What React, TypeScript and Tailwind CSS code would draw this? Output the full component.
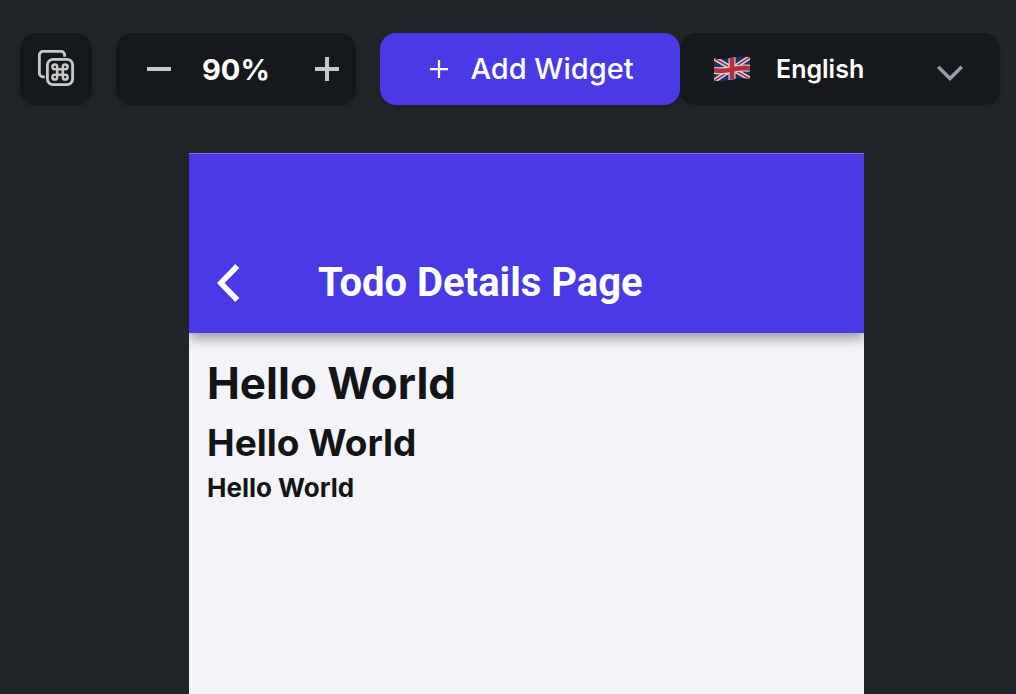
import { useState } from "react";

function CopyCommandIcon() {
  return (
    <svg viewBox="0 0 36 36" className="size-9" fill="none" stroke="#c9c9c9" aria-hidden="true">
      <path d="M6.8 26.9H5a3.6 3.6 0 0 1-3.6-3.6V5A3.6 3.6 0 0 1 5 1.4h18A3.6 3.6 0 0 1 26.600 5v1.700" strokeWidth="2.800" />
      <rect x="9.400" y="9.400" width="25.200" height="25.200" rx="5.600" strokeWidth="2.800" />
      <path
        d="M19.200 19.200h5.600v5.600h-5.600zM19.200 19.200h-2.400a2.400 2.400 0 1 1 2.400-2.400zM24.800 19.200v-2.400a2.400 2.400 0 1 1 2.400 2.400zM24.800 24.800h2.400a2.400 2.400 0 1 1-2.400 2.400zM19.200 24.800v2.400a2.400 2.400 0 1 1-2.400-2.400z"
        strokeWidth="2.500"
      />
    </svg>
  );
}

function FlagIcon() {
  return (
    <svg viewBox="0 0 36 26" className="h-[26px] w-9" aria-hidden="true">
      <defs>
        <clipPath id="flag-shape">
          <path d="M0 2.500C6 3.600 12 3 18 1.700S30 0 36 1.200V23c-6-1.200-12-.6-18 .6S6 26 0 24.500z" />
        </clipPath>
      </defs>
      <g clipPath="url(#flag-shape)">
        <path fill="#173468" d="M0 0h36v26H0z" />
        <path d="M0 2l36 21M0 25L36 1" stroke="#d9dbe0" strokeWidth="4.600" />
        <path d="M0 2l36 21M0 25L36 1" stroke="#b5303d" strokeWidth="1.800" />
        <path d="M0 14.400c6 .9 12 .4 18-.9s12-2 18-1.100M18 0v26" fill="none" stroke="#d9dbe0" strokeWidth="7" />
        <path d="M0 14.400c6 .9 12 .4 18-.9s12-2 18-1.100M18 0v26" fill="none" stroke="#b5303d" strokeWidth="4.800" />
      </g>
    </svg>
  );
}

function PlusIcon({ className, weight }: { className: string; weight: number }) {
  return (
    <svg viewBox="0 0 24 24" className={className} fill="none" stroke="currentColor" strokeWidth={weight} aria-hidden="true">
      <path d="M0 12h24M12 0v24" />
    </svg>
  );
}

function Toolbar() {
  const [zoom, setZoom] = useState(90);
  const [language, setLanguage] = useState("English");

  return (
    <header className="flex h-[72px] pr-4 pl-5">
      <button
        type="button"
        aria-label="Copy shortcut"
        className="mr-6 flex w-[72px] shrink-0 items-center justify-center rounded-2xl bg-[#15191c] pb-0.5 shadow-md"
      >
        <CopyCommandIcon />
      </button>

      <div className="mr-6 flex w-60 shrink-0 items-center rounded-2xl bg-[#15191c] text-[#c6c7c8] shadow-md">
        <button type="button" aria-label="Zoom out" className="flex h-full w-[86px] items-center justify-center" onClick={() => setZoom(Math.max(10, zoom - 10))}>
          <svg viewBox="0 0 24 24" className="size-6" stroke="currentColor" strokeWidth="4" aria-hidden="true">
            <path d="M0 12h24" />
          </svg>
        </button>
        <output className="flex-1 pt-0.5 text-[29px] leading-10 font-bold text-white">{zoom}%</output>
        <button type="button" aria-label="Zoom in" className="flex h-full w-[58px] items-center justify-center" onClick={() => setZoom(Math.min(200, zoom + 10))}>
          <PlusIcon className="size-6" weight={4} />
        </button>
      </div>

      <button
        type="button"
        className="z-10 flex w-[300px] shrink-0 items-center justify-center gap-[22px] rounded-2xl bg-[#493ae5] pl-1 text-[29px] leading-10 font-medium text-white shadow-md"
      >
        <PlusIcon className="size-[18px]" weight={3} />
        <span>Add Widget</span>
      </button>

      <div className="relative min-w-0 flex-1">
        <select
          aria-label="Language"
          value={language}
          onChange={(event) => setLanguage(event.target.value)}
          className="size-full appearance-none rounded-2xl bg-[#15191c] pt-0.5 pr-20 pl-24 text-[25px] font-semibold text-white shadow-md"
        >
          <option>English</option>
        </select>
        <span className="pointer-events-none absolute inset-y-0 left-[34px] flex items-center">
          <FlagIcon />
        </span>
        <span className="pointer-events-none absolute inset-y-0 right-9 flex items-center pt-2">
          <svg viewBox="0 0 28 18" className="h-[18px] w-7" fill="none" stroke="#969da6" strokeWidth="3.500" aria-hidden="true">
            <path d="M2.200 2.700L14 14.500 25.800 2.700" />
          </svg>
        </span>
      </div>
    </header>
  );
}

function PhonePreview() {
  return (
    <section className="flex w-full max-w-[675px] flex-col bg-[#f3f4f9]" aria-label="Page preview">
      <div className="flex h-[180px] items-end border-t border-[#7a70ea] bg-[#493ae5] px-7 pb-6 text-white shadow-[0_5px_12px_rgba(0,0,0,0.4)] [clip-path:inset(0_0_-24px_0)]">
        <button type="button" aria-label="Back" className="mr-[78px] flex h-[52px] items-center">
          <svg viewBox="0 0 23 38" className="h-[38px] w-[23px]" fill="none" stroke="currentColor" strokeWidth="5.500" aria-hidden="true">
            <path d="M20.300 2L3.800 19l16.500 17" />
          </svg>
        </button>
        <h1 className="font-[Roboto,sans-serif] text-[40px] leading-[52px] font-bold whitespace-nowrap">Todo Details Page</h1>
      </div>
      <div className="flex flex-col px-[18px] pt-5 font-bold text-[#131416]">
        <p className="text-[44px] leading-[60px]">Hello World</p>
        <p className="text-[37px] leading-[60px]">Hello World</p>
        <p className="text-[26px] leading-[30px]">Hello World</p>
      </div>
    </section>
  );
}

export default function App() {
  return (
    <div className="flex min-h-screen flex-col bg-[#202528] pt-[33px] font-[Inter,sans-serif]">
      <Toolbar />
      <main className="mt-12 flex flex-1 justify-center pl-[37px]">
        <PhonePreview />
      </main>
    </div>
  );
}
